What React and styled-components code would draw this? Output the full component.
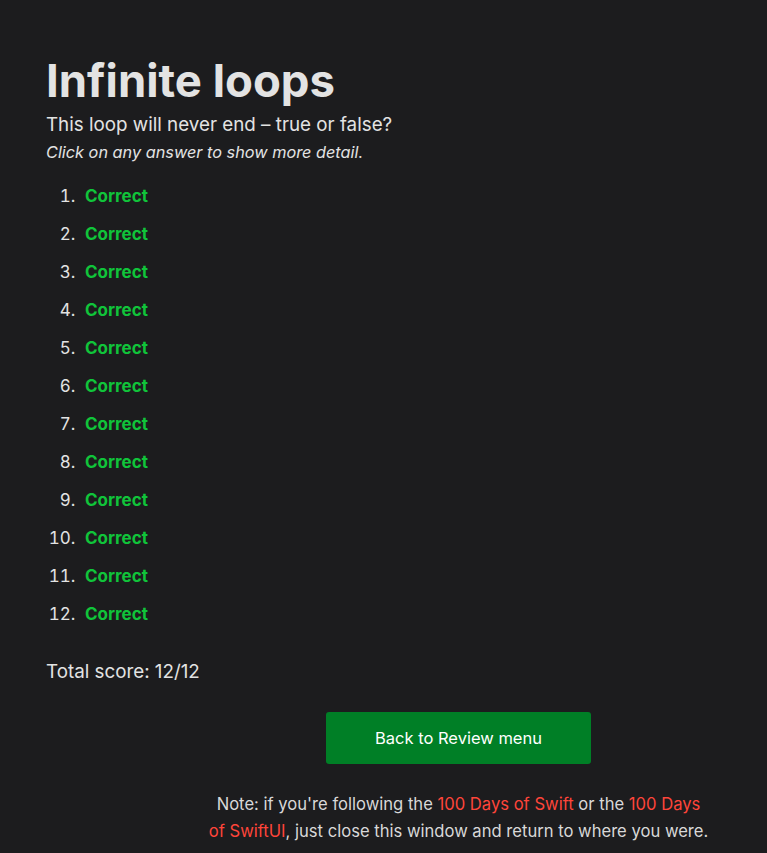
import React from "react";
import styled, { createGlobalStyle } from "styled-components";

const GlobalStyle = createGlobalStyle`
  html, body {
    margin: 0;
    padding: 0;
    background-color: #1c1c1e;
  }
  body {
    font-family: Inter, "Noto Sans", "Liberation Sans", sans-serif;
    color: #e3e3e3;
  }
`;

const Page = styled.div`
  min-height: 853px;
  padding: 53px 46px 0 46px;
  box-sizing: border-box;
`;

const Title = styled.h1`
  font-size: 45.5px;
  font-weight: 700;
  line-height: 56px;
  margin: 0;
  color: #e3e3e3;
`;

const Subtitle = styled.div`
  font-size: 18.8px;
  line-height: 26px;
  margin-top: 3px;
`;

const Hint = styled.div`
  font-size: 16.3px;
  font-style: italic;
  line-height: 28px;
`;

const Answers = styled.ol`
  margin: 18px 0 0 0;
  padding-left: 34px;
  font-size: 17px;
  line-height: 24px;
  & > li {
    padding-left: 5px;
    margin-bottom: 14px;
  }
  & > li::marker {
    color: #e3e3e3;
  }
`;

const Verdict = styled.span`
  font-weight: 700;
  color: ${({ correct }) => (correct ? "#10c43a" : "#ff453a")};
  cursor: pointer;
`;

const Score = styled.div`
  font-size: 18.8px;
  line-height: 24px;
  margin-top: 34px;
`;

const Footer = styled.div`
  width: 501px;
  margin: 28px 12px 0 auto;
  display: flex;
  flex-direction: column;
  align-items: center;
  text-align: center;
`;

const BackButton = styled.button`
  width: 265px;
  height: 52px;
  border: none;
  border-radius: 3px;
  background-color: #007f26;
  color: #ffffff;
  font-family: inherit;
  font-size: 16.5px;
  cursor: pointer;
`;

const Note = styled.p`
  margin: 27px 0 0 0;
  font-size: 16.6px;
  line-height: 27px;
  color: #d8d8d8;
  & > a {
    color: #ff453a;
    text-decoration: none;
  }
`;

const results = Array.from({ length: 12 }, () => true);

export default function App() {
  return (
    <>
      <GlobalStyle />
      <Page>
        <Title>Infinite loops</Title>
        <Subtitle>This loop will never end – true or false?</Subtitle>
        <Hint>Click on any answer to show more detail.</Hint>
        <Answers>
          {results.map((ok, idx) => (
            <li key={idx}>
              <Verdict correct={ok}>{ok ? "Correct" : "Wrong"}</Verdict>
            </li>
          ))}
        </Answers>
        <Score>Total score: 12/12</Score>
        <Footer>
          <BackButton>Back to Review menu</BackButton>
          <Note>
            Note: if you're following the <a href="#">100 Days of Swift</a> or
            the <a href="#">100 Days of SwiftUI</a>, just close this window and
            return to where you were.
          </Note>
        </Footer>
      </Page>
    </>
  );
}
